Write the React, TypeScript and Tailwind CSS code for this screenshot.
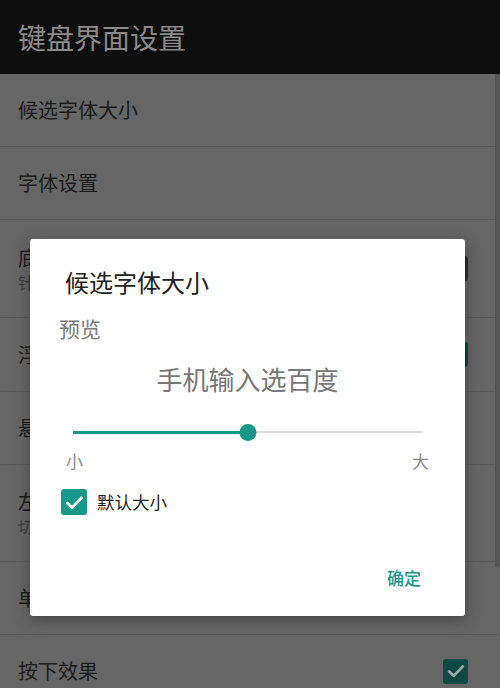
import React from "react";

const font = { fontFamily: '"Noto Sans CJK SC", "Noto Sans", sans-serif' };

function Row({
  title,
  sub,
  h,
  right,
}: {
  title: string;
  sub?: string;
  h: string;
  right?: React.ReactNode;
}) {
  return (
    <div className={`flex items-center justify-between border-b border-[#5a5a5a] pl-[18px] pr-[32px] ${h}`}>
      <div className="flex flex-col">
        <div className="text-[20px] leading-[26px] text-[#1c1c1c]">{title}</div>
        {sub && <div className="text-[16px] leading-[22px] text-[#3e3e3e]">{sub}</div>}
      </div>
      {right}
    </div>
  );
}

function Check({ on, dim }: { on: boolean; dim?: boolean }) {
  if (!on)
    return <div className="h-[25px] w-[25px] rounded-[3px] border-[3px] border-[#2e2e2e]" />;
  return (
    <div className={`flex h-[25px] w-[25px] items-center justify-center rounded-[3px] ${dim ? "bg-[#0e4a43]" : "bg-[#16968a]"}`}>
      <svg viewBox="0 0 24 24" className="h-[22px] w-[22px]" fill="none">
        <path d="M4.5 12.5l5 4.8L19.5 7" stroke={dim ? "#9aa8a5" : "#ffffff"} strokeWidth="3" strokeLinecap="round" strokeLinejoin="round" />
      </svg>
    </div>
  );
}

export default function App() {
  return (
    <div className="relative h-[688px] w-[500px] overflow-hidden bg-[#666666]" style={font}>
      <div className="flex h-[74px] items-center bg-[#0e0e0e] pl-[18px]">
        <span className="text-[28px] leading-[36px] text-[#8a8a8a]">键盘界面设置</span>
      </div>
      <div className="flex">
        <div className="flex-1">
          <Row title="候选字体大小" h="h-[73px]" />
          <Row title="字体设置" h="h-[73px]" />
          <Row title="底部工具栏" sub="针对全键盘的功能设置" h="h-[98px]" right={<Check on={false} />} />
          <Row title="浮动键盘" h="h-[74px]" right={<Check on dim />} />
          <Row title="悬浮模式" h="h-[73px]" />
          <Row title="左右手模式" sub="切换单手键盘方向" h="h-[97px]" />
          <Row title="单手模式" h="h-[73px]" />
          <Row title="按下效果" h="h-[73px]" right={<Check on dim />} />
        </div>
      </div>
      <div className="absolute right-0 top-[74px] h-[493px] w-[5px] bg-[#555555]" />

      <div className="absolute left-[30px] top-[239px] w-[435px] rounded-[3px] bg-white pb-[26px] pt-[28px] shadow-[0_4px_16px_rgba(0,0,0,0.35)]">
        <div className="pl-[35px] text-[24px] leading-[30px] text-[#212121]">候选字体大小</div>
        <div className="mt-[17px] pl-[29px] text-[21px] leading-[28px] text-[#7a7a7a]">预览</div>
        <div className="mt-[20px] text-center text-[26px] leading-[34px] text-[#777777]">手机输入选百度</div>
        <div className="mt-[26px] flex h-[20px] items-center px-[43px]">
          <div className="relative h-[20px] flex-1">
            <div className="absolute left-0 right-0 top-[9px] h-[2px] bg-[#dddddd]" />
            <div className="absolute left-0 top-[8.5px] h-[3px] w-1/2 bg-[#17968a]" />
            <div className="absolute left-1/2 top-[1.5px] h-[17px] w-[17px] -translate-x-1/2 rounded-full bg-[#17968a]" />
          </div>
        </div>
        <div className="mt-[7px] flex justify-between pl-[36px] pr-[36px] text-[17px] leading-[24px] text-[#8a8a8a]">
          <span>小</span>
          <span>大</span>
        </div>
        <div className="mt-[16px] flex items-center gap-[10px] pl-[31px]">
          <div className="flex h-[26px] w-[26px] items-center justify-center rounded-[3px] bg-[#17968a]">
            <svg viewBox="0 0 24 24" className="h-[23px] w-[23px]" fill="none">
              <path d="M4.5 12.5l5 4.8L19.5 7" stroke="#ffffff" strokeWidth="3" strokeLinecap="round" strokeLinejoin="round" />
            </svg>
          </div>
          <span className="text-[17.5px] leading-[24px] text-[#222222]">默认大小</span>
        </div>
        <div className="mt-[51px] flex justify-end pr-[44px]">
          <span className="text-[17px] font-medium leading-[24px] text-[#17968a]">确定</span>
        </div>
      </div>
    </div>
  );
}
